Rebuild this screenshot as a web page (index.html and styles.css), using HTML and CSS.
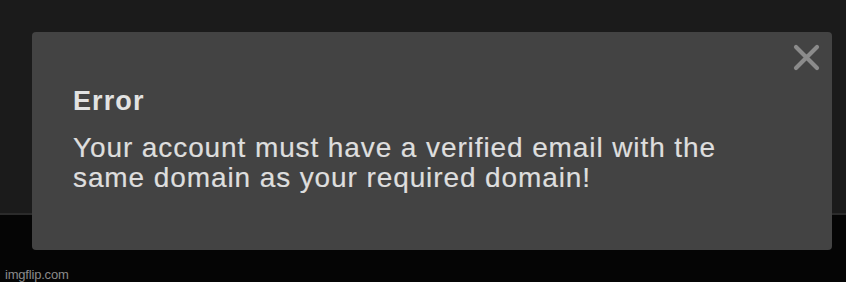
FILE: index.html
```html
<!DOCTYPE html>
<html>
<head>
<meta charset="utf-8">
<link rel="stylesheet" href="styles.css">
</head>
<body>
<div class="page">
  <div class="top"></div>
  <div class="bottom"></div>
  <div class="modal">
    <svg class="close" width="27" height="27" viewBox="0 0 27 27">
      <path d="M3 3 L24 24 M24 3 L3 24" stroke="#8b8b8b" stroke-width="4.2" stroke-linecap="round" fill="none"/>
    </svg>
    <div class="title">Error</div>
    <div class="message">Your account must have a verified email with the<br>same domain as your required domain!</div>
  </div>
  <div class="watermark">imgflip.com</div>
</div>
</body>
</html>
```
FILE: styles.css
```css
html, body {
  margin: 0;
  padding: 0;
  background: #050505;
}
.page {
  position: relative;
  width: 846px;
  height: 282px;
  overflow: hidden;
  display: flex;
  flex-direction: column;
}
.top {
  height: 213px;
  background: #1b1b1b;
  border-bottom: 2px solid #2b2b2b;
  flex: none;
}
.bottom {
  flex: 1;
  background: #050505;
}
.modal {
  position: absolute;
  left: 32px;
  top: 32px;
  width: 800px;
  height: 218px;
  box-sizing: border-box;
  background: #434343;
  border-radius: 4px;
  padding: 54px 41px 0 41px;
  font-family: "Liberation Sans", Arial, Helvetica, sans-serif;
}
.close {
  position: absolute;
  right: 12px;
  top: 12px;
}
.title {
  font-size: 27px;
  line-height: 31px;
  font-weight: bold;
  color: #e2e2e2;
  letter-spacing: 1.1px;
}
.message {
  margin-top: 16px;
  font-size: 28px;
  line-height: 30px;
  color: #dedede;
  letter-spacing: 0.9px;
  -webkit-text-stroke: 0.2px #dedede;
}
.watermark {
  position: absolute;
  left: 5px;
  top: 267px;
  font-family: "Liberation Sans Narrow", "Liberation Sans", Arial, sans-serif;
  font-size: 13px;
  line-height: 15px;
  color: #8a8a8a;
  letter-spacing: -0.2px;
}
```
